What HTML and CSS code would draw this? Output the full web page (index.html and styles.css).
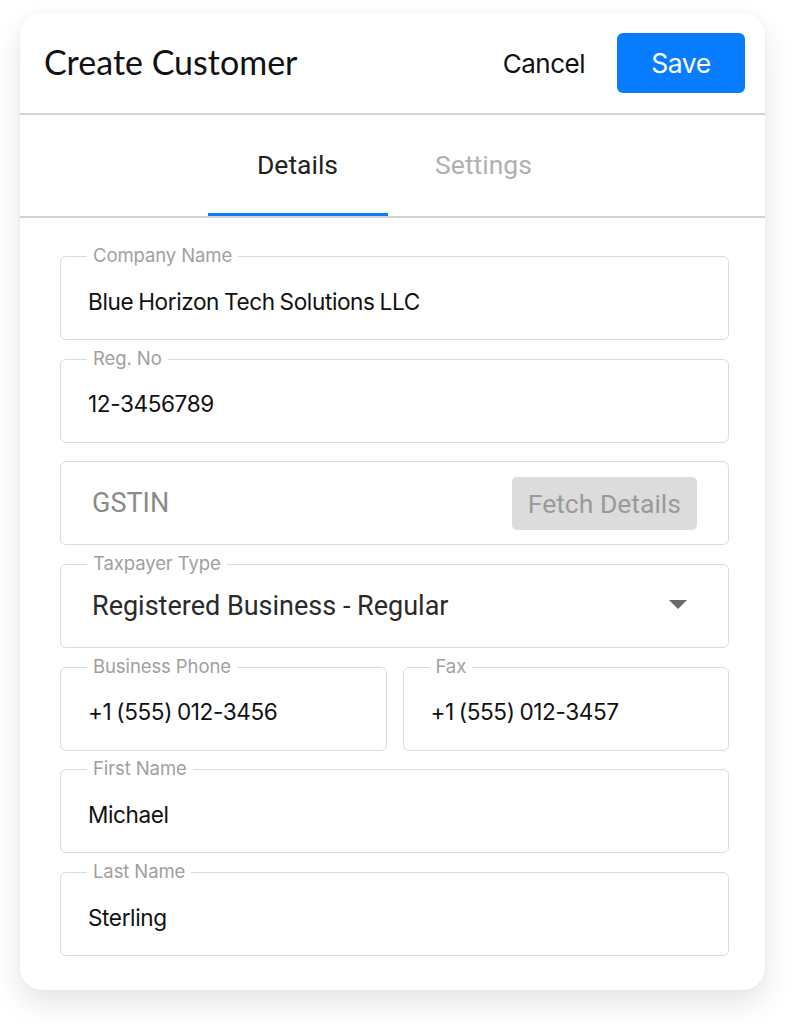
FILE: index.html
```html
<!DOCTYPE html>
<html lang="en">
<head>
    <meta charset="UTF-8">
    <meta name="viewport" content="width=device-width, initial-scale=1.0">
    <title>Create Customer</title>
    <link rel="stylesheet" href="styles.css">
</head>
<body>
    <div class="card">
        <div class="header">
            <h1 class="title">Create Customer</h1>
            <div class="actions">
                <button class="btn-cancel">Cancel</button>
                <button class="btn-save">Save</button>
            </div>
        </div>

        <div class="tabs">
            <div class="tab active">Details</div>
            <div class="tab">Settings</div>
        </div>

        <form class="form">
            <div class="field">
                <span class="label">Company Name</span>
                <span class="value">Blue Horizon Tech Solutions LLC</span>
            </div>
            <div class="field">
                <span class="label">Reg. No</span>
                <span class="value">12-3456789</span>
            </div>
            <div class="field gstin">
                <span class="placeholder">GSTIN</span>
                <button type="button" class="btn-fetch">Fetch Details</button>
            </div>
            <div class="field select">
                <span class="label">Taxpayer Type</span>
                <span class="select-value">Registered Business - Regular</span>
                <span class="caret"></span>
            </div>
            <div class="row">
                <div class="field">
                    <span class="label">Business Phone</span>
                    <span class="value">+1 (555) 012-3456</span>
                </div>
                <div class="field">
                    <span class="label">Fax</span>
                    <span class="value">+1 (555) 012-3457</span>
                </div>
            </div>
            <div class="field">
                <span class="label">First Name</span>
                <span class="value">Michael</span>
            </div>
            <div class="field">
                <span class="label">Last Name</span>
                <span class="value">Sterling</span>
            </div>
        </form>
    </div>
</body>
</html>
```

FILE: styles.css
```css
body {
    font-family: Inter, Arial, sans-serif;
    margin: 0;
    padding: 0 0 40px 0;
    background-color: #fff;
}
.card {
    width: 745px;
    margin: 13px 0 0 20px;
    background-color: #fff;
    border-radius: 22px;
    box-shadow: 0 14px 30px rgba(0, 0, 0, 0.1), 0 0 6px rgba(0, 0, 0, 0.04);
    padding-bottom: 34px;
}
.header {
    height: 100px;
    display: flex;
    align-items: center;
    justify-content: space-between;
    padding: 0 20px 0 24px;
    border-bottom: 2px solid #d2d2d2;
}
.title {
    margin: 0 0 3px 0;
    font-family: Lato, Arial, sans-serif;
    font-weight: 400;
    font-size: 34px;
    color: #111;
}
.actions {
    display: flex;
    align-items: center;
    gap: 32px;
}
.btn-cancel {
    border: none;
    background: none;
    padding: 0;
    font-family: Inter, Arial, sans-serif;
    font-size: 26px;
    letter-spacing: -0.5px;
    color: #111;
}
.btn-save {
    width: 128px;
    height: 60px;
    border: none;
    border-radius: 6px;
    background-color: #087cff;
    color: #fff;
    font-family: Inter, Arial, sans-serif;
    font-size: 26.5px;
    letter-spacing: -0.5px;
}
.tabs {
    display: flex;
    justify-content: center;
    gap: 6px;
    padding-right: 4px;
    border-bottom: 2px solid #d2d2d2;
}
.tab {
    width: 180px;
    height: 98px;
    display: flex;
    align-items: center;
    justify-content: center;
    font-family: Roboto, Arial, sans-serif;
    font-size: 26.5px;
    color: #b0b0b0;
    border-bottom: 3px solid transparent;
}
.tab.active {
    color: #222;
    border-bottom-color: #087cff;
}
.form {
    display: flex;
    flex-direction: column;
    gap: 18.7px;
    padding: 38px 36px 0 40px;
}
.row {
    display: flex;
    gap: 16px;
}
.row .field {
    flex: 1;
}
.field {
    position: relative;
    height: 84px;
    box-sizing: border-box;
    border: 1.5px solid #dcdcdc;
    border-radius: 6px;
    display: flex;
    align-items: center;
    padding: 6px 28px 0 27px;
}
.label {
    position: absolute;
    top: -13px;
    left: 26px;
    padding: 0 6px;
    background-color: #fff;
    font-size: 18.5px;
    letter-spacing: -0.1px;
    color: #a0a0a0;
}
.value {
    font-size: 22.6px;
    letter-spacing: -0.4px;
    word-spacing: -1px;
    color: #111;
}
.gstin {
    justify-content: space-between;
    padding: 0 31px 0 31px;
}
.placeholder {
    font-family: Roboto, Arial, sans-serif;
    font-size: 27px;
    color: #8a8a8a;
}
.btn-fetch {
    height: 53px;
    padding: 0 16px;
    border: none;
    border-radius: 5px;
    background-color: #dcdcdc;
    font-family: Roboto, Arial, sans-serif;
    font-size: 26.5px;
    color: #9a9a9a;
}
.select {
    justify-content: space-between;
    padding: 0 41px 0 31px;
}
.select-value {
    font-family: Roboto, Arial, sans-serif;
    font-size: 27px;
    color: #2a2a2a;
}
.caret {
    width: 0;
    height: 0;
    margin-top: -4px;
    border-left: 9px solid transparent;
    border-right: 9px solid transparent;
    border-top: 9px solid #6a6a6a;
}
```
